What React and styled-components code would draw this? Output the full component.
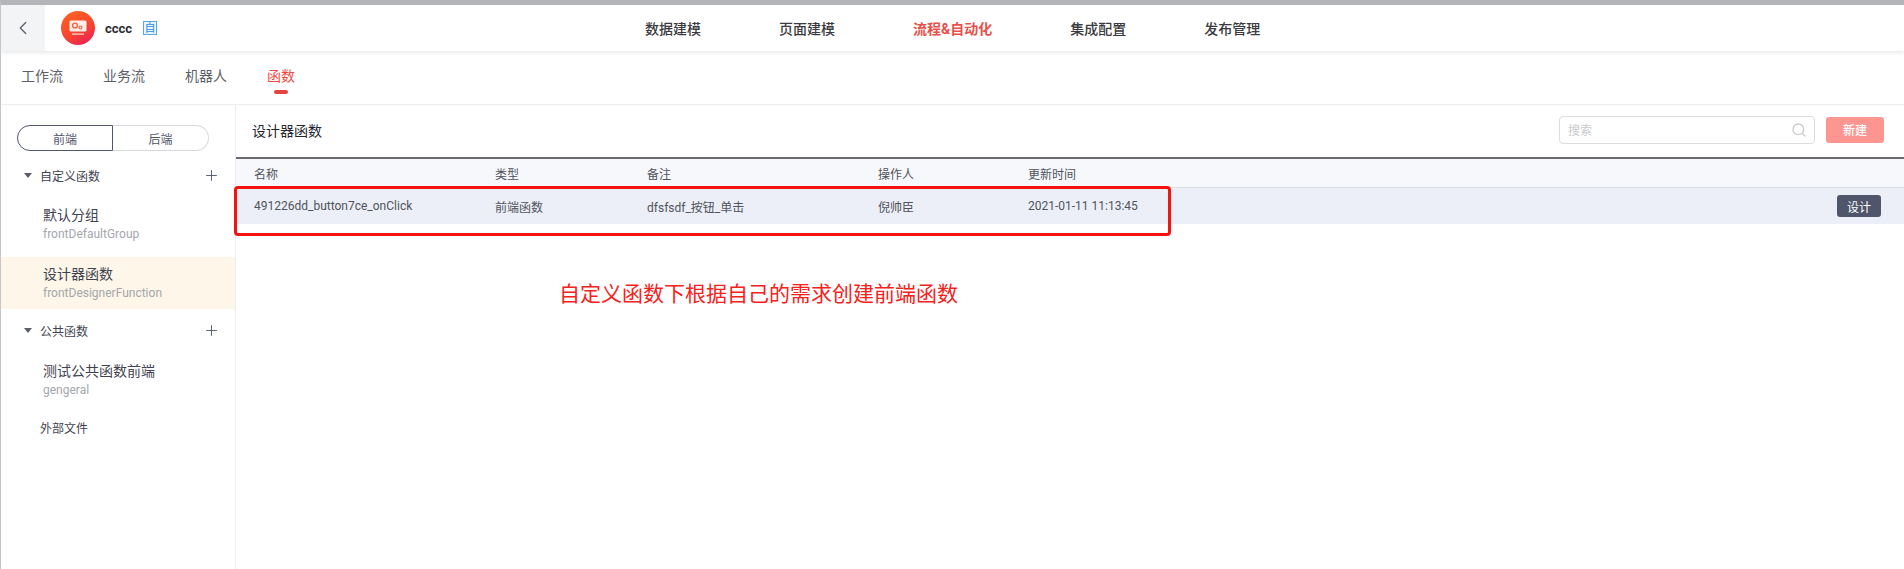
import styled, { createGlobalStyle } from 'styled-components';
import { useState } from 'react';
import { ChevronLeft, Plus, Search } from 'lucide-react';

const GlobalStyle = createGlobalStyle`
    *{
        margin:0;
        padding:0;
        box-sizing:border-box;
    }
    body{
        background:#fff;
        font-family:Roboto,"Noto Sans CJK SC",sans-serif;
        overflow:hidden;
    }
`;

const Page = styled.div`
position:relative;
width:1904px;
height:569px;
border-top:5px solid #b4b5b8;
border-left:1px solid #c4c6ca;
display:flex;
flex-direction:column;
overflow:hidden;
`;

const Header = styled.header`
position:relative;
display:flex;
align-items:center;
height:46px;
flex:none;
background:#fff;
box-shadow:0 1px 5px rgba(0,0,0,0.12);
z-index:1;
`;

const BackButton = styled.div`
display:flex;
align-items:center;
justify-content:center;
width:44px;
height:46px;
background:#f3f4f6;
color:#5f6470;
`;

const Logo = styled.div`
display:flex;
align-items:center;
justify-content:center;
width:34px;
height:34px;
margin-left:16px;
border-radius:50%;
background:linear-gradient(150deg,#fb5f24 15%,#f9452f 55%,#e81c5c 95%);
`;

const AppName = styled.span`
margin-left:10px;
font-size:13px;
font-weight:700;
color:#2d2d33;
`;

const Tag = styled.span`
display:flex;
align-items:center;
justify-content:center;
width:14px;
height:14px;
margin-left:11px;
border:1px solid #58a6e8;
background:#e9f4fd;
color:#2d8ee0;
font-size:11px;
line-height:1;
`;

const TopNav = styled.nav`
position:absolute;
left:644px;
top:0;
height:46px;
display:flex;
align-items:center;
gap:78px;
`;

const TopLink = styled.span`
font-size:14px;
white-space:nowrap;
font-weight:${(p) => (p.$active ? 700 : 500)};
color:${(p) => (p.$active ? '#e8504b' : '#3a3a40')};
`;

const TabBar = styled.div`
display:flex;
flex:none;
height:54px;
padding-left:20px;
gap:40px;
border-bottom:1px solid #ecedf0;
`;

const Tab = styled.div`
position:relative;
padding-top:15px;
font-size:14px;
line-height:20px;
color:${(p) => (p.$active ? '#ef4a45' : '#5d6068')};

&::after{
    content:'';
    display:${(p) => (p.$active ? 'block' : 'none')};
    position:absolute;
    left:7px;
    top:39px;
    width:14px;
    height:4px;
    border-radius:2px;
    background:#e2453f;
}
`;

const Body = styled.div`
display:flex;
flex:1;
min-height:0;
`;

const Sidebar = styled.aside`
width:235px;
flex:none;
border-right:1px solid #ecedf0;
padding-top:20px;
`;

const Toggle = styled.div`
display:flex;
width:192px;
height:26px;
margin-left:16px;
`;

const ToggleOption = styled.div`
width:96px;
display:flex;
align-items:center;
justify-content:center;
font-size:12px;
color:#50566a;
border:1px solid ${(p) => (p.$active ? '#50566b' : '#d8d9dc')};
border-left:${(p) => (p.$active ? '' : 'none')};
border-radius:${(p) => (p.$active ? '13px 0 0 13px' : '0 13px 13px 0')};
`;

const GroupRow = styled.div`
display:flex;
align-items:center;
height:30px;
margin-top:${(p) => p.$top || 0}px;
padding-left:23px;
padding-right:15px;
font-size:12px;
color:#3f4350;
`;

const Caret = styled.i`
width:0;
height:0;
margin-right:8px;
border-left:4px solid transparent;
border-right:4px solid transparent;
border-top:5px solid #5a5f6b;
`;

const GroupLabel = styled.span`
flex:1;
`;

const PlusIcon = styled(Plus)`
color:#50566b;
`;

const PlainRow = styled(GroupRow)`
padding-left:39px;
`;

const Item = styled.div`
height:52px;
margin-top:${(p) => p.$top || 0}px;
padding:8px 0 0 42px;
background:${(p) => (p.$active ? '#fef6e8' : 'transparent')};
`;

const ItemTitle = styled.div`
font-size:14px;
line-height:18px;
color:#3f4350;
`;

const ItemSub = styled.div`
font-size:12px;
line-height:18px;
margin-top:1px;
color:#a4a6ae;
`;

const Main = styled.main`
flex:1;
min-width:0;
`;

const Toolbar = styled.div`
display:flex;
align-items:center;
height:52px;
padding:0 20px 3px 16px;
`;

const Title = styled.h2`
flex:1;
font-size:14px;
font-weight:400;
color:#24262c;
`;

const SearchBox = styled.div`
display:flex;
align-items:center;
justify-content:space-between;
width:256px;
height:28px;
padding:0 7px 0 8px;
border:1px solid #dcdde0;
border-radius:4px;
font-size:12px;
color:#c9cacd;
`;

const AddButton = styled.button`
width:58px;
height:26px;
margin-left:11px;
border:none;
border-radius:3px;
background:#fd9690;
color:#fff;
font-family:inherit;
font-size:12px;
font-weight:500;
`;

const Table = styled.div`
display:flex;
flex-direction:column;
`;

const Row = styled.div`
display:grid;
grid-template-columns:241px 152px 231px 150px 1fr 44px;
align-items:center;
height:${(p) => (p.$head ? '31px' : '36px')};
padding:0 23px 0 18px;
font-size:12px;
color:#50535c;
background:${(p) => (p.$head ? '#f7f8fc' : '#eceff7')};
border-top:${(p) => (p.$head ? '2px solid #6b6c73' : 'none')};
border-bottom:${(p) => (p.$head ? '1px solid #dcdee3' : 'none')};
`;

const DesignButton = styled.button`
width:44px;
height:22px;
border:none;
border-radius:3px;
background:#4f566b;
color:#fff;
font-family:inherit;
font-size:12px;
`;

const Highlight = styled.div`
position:absolute;
left:233px;
top:181px;
width:937px;
height:50px;
border:3px solid #f5130f;
border-radius:4px;
pointer-events:none;
`;

const Note = styled.div`
position:absolute;
left:558px;
top:275px;
font-size:21px;
line-height:28px;
color:#f5211c;
white-space:nowrap;
`;

function LogoMark() {
    return (
        <svg width="18" height="16" viewBox="0 0 18 16" fill="none">
            <rect x="0.5" y="0.5" width="17" height="11" rx="1.5" fill="#fff" fillOpacity="0.9" />
            <circle cx="6" cy="5.5" r="2.4" fill="none" stroke="#f9603c" strokeWidth="1.4" />
            <circle cx="11.5" cy="7.5" r="1.5" fill="none" stroke="#f9603c" strokeWidth="1.1" />
            <rect x="3" y="13.5" width="12" height="1.2" fill="#fff" fillOpacity="0.85" />
        </svg>
    );
}

const topLinks = ['数据建模', '页面建模', '流程&自动化', '集成配置', '发布管理'];
const tabs = ['工作流', '业务流', '机器人', '函数'];

export default function App() {
    const [side, setSide] = useState('前端');

    return (
        <>
            <GlobalStyle />
            <Page>
                <Header>
                    <BackButton><ChevronLeft size={22} strokeWidth={1.5} /></BackButton>
                    <Logo><LogoMark /></Logo>
                    <AppName>cccc</AppName>
                    <Tag>自</Tag>
                    <TopNav>
                        {topLinks.map((link) => (
                            <TopLink key={link} $active={link.includes('&')}>{link}</TopLink>
                        ))}
                    </TopNav>
                </Header>
                <TabBar>
                    {tabs.map((tab) => (
                        <Tab key={tab} $active={tab === '函数'}>{tab}</Tab>
                    ))}
                </TabBar>
                <Body>
                    <Sidebar>
                        <Toggle>
                            {['前端', '后端'].map((name) => (
                                <ToggleOption key={name} $active={name === '前端'} onClick={() => setSide(name)}>{name}</ToggleOption>
                            ))}
                        </Toggle>
                        <GroupRow $top={9}>
                            <Caret />
                            <GroupLabel>自定义函数</GroupLabel>
                            <PlusIcon size={17} strokeWidth={1.3} />
                        </GroupRow>
                        <Item $top={8}>
                            <ItemTitle>默认分组</ItemTitle>
                            <ItemSub>frontDefaultGroup</ItemSub>
                        </Item>
                        <Item $active $top={7}>
                            <ItemTitle>设计器函数</ItemTitle>
                            <ItemSub>frontDesignerFunction</ItemSub>
                        </Item>
                        <GroupRow $top={6}>
                            <Caret />
                            <GroupLabel>公共函数</GroupLabel>
                            <PlusIcon size={17} strokeWidth={1.3} />
                        </GroupRow>
                        <Item $top={9}>
                            <ItemTitle>测试公共函数前端</ItemTitle>
                            <ItemSub>gengeral</ItemSub>
                        </Item>
                        <PlainRow $top={6}>外部文件</PlainRow>
                    </Sidebar>
                    <Main>
                        <Toolbar>
                            <Title>设计器函数</Title>
                            <SearchBox>
                                搜索
                                <Search size={16} strokeWidth={2} color="#c9cacd" />
                            </SearchBox>
                            <AddButton>新建</AddButton>
                        </Toolbar>
                        <Table>
                            <Row $head>
                                <span>名称</span>
                                <span>类型</span>
                                <span>备注</span>
                                <span>操作人</span>
                                <span>更新时间</span>
                                <span />
                            </Row>
                            <Row>
                                <span>491226dd_button7ce_onClick</span>
                                <span>前端函数</span>
                                <span>dfsfsdf_按钮_单击</span>
                                <span>倪帅臣</span>
                                <span>2021-01-11 11:13:45</span>
                                <DesignButton>设计</DesignButton>
                            </Row>
                        </Table>
                    </Main>
                </Body>
                <Highlight />
                <Note>自定义函数下根据自己的需求创建前端函数</Note>
            </Page>
        </>
    );
}
